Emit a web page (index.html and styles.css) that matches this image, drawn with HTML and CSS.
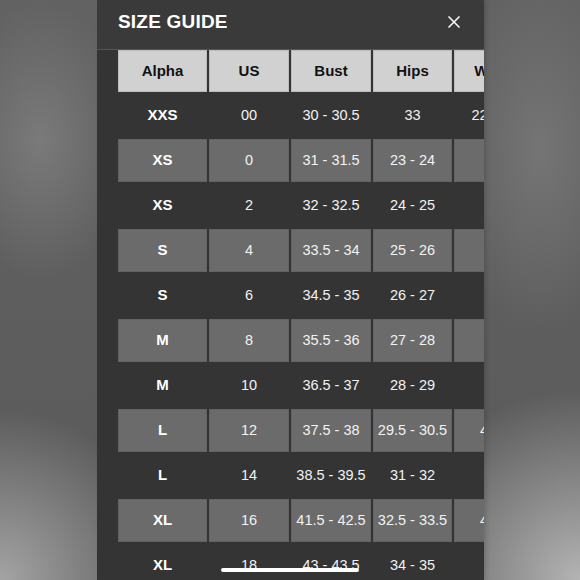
FILE: index.html
```html
<!DOCTYPE html>
<html>
<head>
<meta charset="utf-8">
<link rel="stylesheet" href="styles.css">
</head>
<body>
<div class="side side-left"></div>
<div class="panel">
  <div class="panel-head">
    <h1 class="title">SIZE GUIDE</h1>
    <svg class="close" width="12" height="12" viewBox="0 0 12 12"><path d="M0.5 0.5 L11.5 11.5 M11.5 0.5 L0.5 11.5" stroke="#fff" stroke-width="1.5" fill="none"/></svg>
  </div>
  <div class="scroll">
    <div class="grid">
      <div class="cell th">Alpha</div><div class="cell th">US</div><div class="cell th">Bust</div><div class="cell th">Hips</div><div class="cell th">Waist</div>

      <div class="cell alpha">XXS</div><div class="cell">00</div><div class="cell">30 - 30.5</div><div class="cell">33</div><div class="cell">22 - 23</div>

      <div class="cell alpha g">XS</div><div class="cell g">0</div><div class="cell g">31 - 31.5</div><div class="cell g">23 - 24</div><div class="cell g">23</div>

      <div class="cell alpha">XS</div><div class="cell">2</div><div class="cell">32 - 32.5</div><div class="cell">24 - 25</div><div class="cell">24</div>

      <div class="cell alpha g">S</div><div class="cell g">4</div><div class="cell g">33.5 - 34</div><div class="cell g">25 - 26</div><div class="cell g">25</div>

      <div class="cell alpha">S</div><div class="cell">6</div><div class="cell">34.5 - 35</div><div class="cell">26 - 27</div><div class="cell">26</div>

      <div class="cell alpha g">M</div><div class="cell g">8</div><div class="cell g">35.5 - 36</div><div class="cell g">27 - 28</div><div class="cell g">27</div>

      <div class="cell alpha">M</div><div class="cell">10</div><div class="cell">36.5 - 37</div><div class="cell">28 - 29</div><div class="cell">28</div>

      <div class="cell alpha g">L</div><div class="cell g">12</div><div class="cell g">37.5 - 38</div><div class="cell g">29.5 - 30.5</div><div class="cell g">41.5</div>

      <div class="cell alpha">L</div><div class="cell">14</div><div class="cell">38.5 - 39.5</div><div class="cell">31 - 32</div><div class="cell">30</div>

      <div class="cell alpha g">XL</div><div class="cell g">16</div><div class="cell g">41.5 - 42.5</div><div class="cell g">32.5 - 33.5</div><div class="cell g">43.5</div>

      <div class="cell alpha">XL</div><div class="cell">18</div><div class="cell">43 - 43.5</div><div class="cell">34 - 35</div><div class="cell">35</div>
    </div>
  </div>
</div>
<div class="side side-right"></div>
<div class="home-bar"></div>
</body>
</html>
```
FILE: styles.css
```css
html, body {
  margin: 0;
  padding: 0;
  width: 580px;
  height: 580px;
  overflow: hidden;
}
body {
  display: flex;
  position: relative;
  font-family: "Liberation Sans", Arial, sans-serif;
  background:
    radial-gradient(circle at 0 100%, #a4a4a4 0, rgba(120,120,120,0) 170px),
    radial-gradient(circle at 100% 100%, #b4b4b4 0, rgba(120,120,120,0) 190px),
    radial-gradient(ellipse 90px 140px at 40px 140px, #7a7a7a 0, rgba(120,120,120,0) 100%),
    radial-gradient(ellipse 90px 180px at 540px 150px, #757575 0, rgba(120,120,120,0) 100%),
    linear-gradient(#626262, #5a5a5a);
}
.side {
  height: 580px;
}
.side-left {
  width: 97px;
  flex: none;
}
.side-right {
  flex: 1;
}
.panel {
  width: 387px;
  flex: none;
  height: 580px;
  background: #343434;
  display: flex;
  flex-direction: column;
  box-shadow: 2px 0 4px rgba(0,0,0,0.15);
}
.panel-head {
  height: 49px;
  flex: none;
  background: #3a3a3a;
  border-bottom: 1px solid #545454;
  box-sizing: content-box;
  display: flex;
  align-items: center;
  justify-content: space-between;
  padding: 0 24px 0 21px;
}
.title {
  margin: 0;
  color: #fff;
  font-size: 19px;
  font-weight: 700;
  letter-spacing: 0.2px;
  position: relative;
  top: -3px;
}
.close {
  display: block;
  position: relative;
  top: -3px;
}
.scroll {
  flex: 1;
  overflow: hidden;
  padding-left: 21px;
}
.grid {
  display: grid;
  grid-template-columns: 89px 80px 80px 79px 80px;
  grid-template-rows: 42px;
  grid-auto-rows: 43px;
  gap: 2px;
  width: 416px;
}
.cell {
  display: flex;
  align-items: center;
  justify-content: center;
  padding-bottom: 2px;
  box-sizing: border-box;
  color: #f2f2f2;
  font-size: 14.5px;
  white-space: nowrap;
}
.th {
  background: #d1d1d1;
  color: #111;
  font-weight: 700;
  font-size: 15px;
  box-shadow: inset 0 0 0 1px #bcbcbc;
}
.alpha {
  font-weight: 700;
  font-size: 15px;
  color: #fff;
}
.g {
  background: #6b6b6b;
  box-shadow: inset 0 0 0 1px #636363;
}
.home-bar {
  position: absolute;
  left: 221px;
  top: 568px;
  width: 138px;
  height: 4px;
  border-radius: 2px;
  background: #fff;
}
```
